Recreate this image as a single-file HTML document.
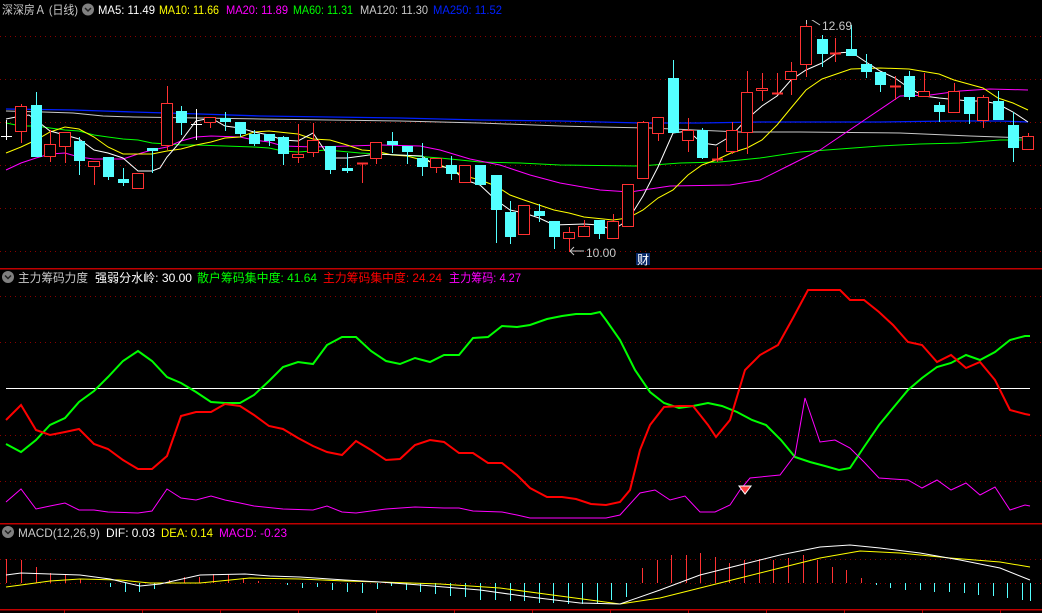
<!DOCTYPE html>
<html><head><meta charset="utf-8"><style>
html,body{margin:0;padding:0;background:#000;width:1042px;height:613px;overflow:hidden}
svg{display:block}
text{font-family:"Liberation Sans","Noto Sans CJK SC",sans-serif;font-size:12px}
</style></head><body>
<svg id="s" width="1042" height="613" xmlns="http://www.w3.org/2000/svg"></svg>
<script>
var o='';
function L(x1,y1,x2,y2,c,w,d){o+='<line x1="'+x1+'" y1="'+y1+'" x2="'+x2+'" y2="'+y2+'" stroke="'+c+'" stroke-width="'+(w||1)+'"'+(d?' stroke-dasharray="'+d+'"':'')+' shape-rendering="crispEdges"/>';}
function P(a,c,w){var p=[];for(var i=0;i<a.length;i+=2)p.push(a[i]+','+a[i+1]);o+='<polyline points="'+p.join(' ')+'" fill="none" stroke="'+c+'" stroke-width="'+(w||1)+'"/>';}
function T(x,y,t,c,tl){o+='<text x="'+x+'" y="'+y+'" fill="'+c+'"'+(tl?' textLength="'+tl+'" lengthAdjust="spacingAndGlyphs"':'')+'>'+t+'</text>';}
[36,79,122,165,208,251].forEach(function(y){L(0,y+.5,1042,y+.5,'#8a0000',1,'1,4');});
[296,342,435,481].forEach(function(y){L(0,y+.5,1042,y+.5,'#8a0000',1,'1,4');});
[559,583].forEach(function(y){L(0,y+.5,1042,y+.5,'#8a0000',1,'1,4');});
L(0,268.5,1042,268.5,'#c00000',1.5);L(0,523.5,1042,523.5,'#c00000',1.5);L(0,609.5,1042,609.5,'#c00000',1.5);
[64,142,220,298,376,454,532,610,688,766,844,922,1000].forEach(function(x){L(x+.5,609,x+.5,613,'#c00000');});
P([6,111,43,112,73,113,103,116,133,117,200,118,260,119,330,120,400,121,480,123,560,126,600,127,650,128,740,132,800,132,900,133,970,136,1028,138],'#c8c8c8');
P([6,109,73,110,103,111,133,112,200,114,260,116,330,117,400,118,480,120,560,121,640,123,700,123,760,122,820,122,880,122,950,121,1000,121,1028,122],'#0020ff',1.3);
P([6,123,21,126,36,126,50,128,65,130,79,131,94,135,108,137,123,139,138,140,152,143,167,144,181,145,196,145,225,146,254,147,269,148,283,151,298,152,327,150,360,153,400,155,440,158,480,162,520,163,560,165,640,166,680,163,720,162,760,158,800,152,840,149,880,146,920,144,960,143,1000,140,1028,140],'#00ff00');
P([6,170,21,163,36,158,50,154,65,153,79,157,94,159,123,159,138,154,152,150,167,147,181,141,196,137,211,136,240,137,254,140,269,142,283,146,313,147,350,146,380,145,420,146,440,150,470,159,500,165,530,175,560,183,600,190,630,192,670,186,730,185,760,180,790,165,820,150,860,123,900,96,930,95,960,91,990,89,1028,90],'#ff00ff');
P([6,153,21,147,36,140,50,132,65,127,79,129,94,137,108,147,123,154,152,154,167,151,181,149,196,145,211,142,225,138,240,137,254,132,269,131,298,134,313,139,330,140,347,145,362,150,376,151,392,155,407,156,422,160,436,163,451,170,465,176,480,180,496,186,510,195,524,200,539,205,554,210,569,213,584,217,613,220,628,218,643,210,658,198,673,190,688,175,702,165,716,160,731,153,747,148,762,140,777,125,791,108,806,90,822,79,851,69,880,68,909,69,939,74,954,80,983,88,998,98,1013,103,1028,110],'#ffff00');
P([6,119,21,116,29,115,36,120,50,131,65,135,79,139,94,150,108,153,123,158,138,171,152,171,160,168,167,157,181,141,196,121,211,118,225,126,240,128,254,132,269,135,283,140,298,141,313,133,330,158,347,158,362,156,376,154,422,156,436,166,451,168,465,180,480,185,496,200,510,210,524,213,539,218,554,225,584,224,599,225,613,230,628,220,643,196,658,167,673,133,688,131,702,143,716,145,731,136,747,119,762,106,777,96,791,80,806,70,822,63,837,53,851,52,866,62,880,71,895,78,909,88,924,96,939,98,969,101,983,101,998,104,1013,112,1028,122],'#ffffff');
var K=[[6,136,136,120,140,'w'],[21,106,132,104,143,'r'],[36,105,157,92,157,'c'],[50,144,157,130,162,'r'],[65,132,147,132,163,'r'],[79,141,161,137,175,'c'],[94,161,167,161,185,'r'],[108,157,177,157,180,'c'],[123,179,183,168,186,'c'],[138,173,189,173,189,'r'],[152,148,151,148,173,'c'],[167,103,146,86,150,'r'],[181,111,123,106,135,'c'],[196,124,124,109,140,'w'],[210,117,123,117,128,'r'],[225,118,122,112,131,'c'],[240,122,134,122,137,'c'],[254,134,144,130,146,'c'],[269,134,141,134,146,'c'],[283,137,154,136,165,'c'],[298,154,158,124,163,'r'],[313,140,153,123,157,'r'],[330,146,170,146,174,'c'],[347,168,171,153,173,'c'],[362,163,163,163,183,'R'],[376,142,159,142,164,'r'],[392,141,145,132,153,'c'],[407,146,152,146,164,'c'],[422,158,167,143,176,'c'],[436,158,168,158,173,'r'],[451,165,174,156,180,'c'],[465,165,183,165,183,'r'],[480,165,185,165,185,'c'],[496,175,210,175,243,'c'],[510,212,237,201,244,'c'],[524,205,235,205,235,'r'],[539,211,216,204,222,'c'],[554,221,237,221,249,'c'],[569,232,239,227,252,'r'],[584,226,237,220,237,'r'],[599,220,234,220,239,'c'],[613,221,239,214,239,'r'],[628,184,227,184,227,'r'],[643,122,179,121,179,'r'],[658,117,134,117,141,'r'],[673,78,133,60,133,'c'],[688,130,141,118,152,'r'],[702,130,158,128,159,'c'],[717,159,159,147,162,'R'],[732,130,152,122,154,'r'],[747,92,133,71,154,'r'],[762,88,91,73,101,'r'],[777,93,93,73,93,'R'],[791,71,80,62,95,'r'],[806,26,65,20,77,'r'],[822,39,54,35,67,'c'],[835,53,53,38,62,'R'],[851,49,56,25,56,'c'],[866,64,72,54,78,'c'],[880,72,85,72,92,'c'],[895,86,86,76,100,'R'],[909,76,97,71,100,'c'],[924,91,97,73,97,'r'],[939,105,112,102,122,'c'],[954,91,113,83,113,'r'],[969,97,114,97,124,'c'],[983,97,121,95,128,'r'],[998,101,120,91,120,'c'],[1013,125,148,112,162,'c'],[1028,136,150,133,150,'r']];
K.forEach(function(k){var x=k[0],c=k[5];
 var col=(c=='c')?'#54ffff':(c=='w')?'#ffffff':'#ff3232';
 L(x+.5,k[3],x+.5,k[4],col);
 if(c=='r'){o+='<rect x="'+(x-5.5)+'" y="'+(k[1]+.5)+'" width="11" height="'+Math.max(1,k[2]-k[1]-1)+'" fill="#000" stroke="#ff3232" stroke-width="1"/>';}
 else if(c=='c'){o+='<rect x="'+(x-5)+'" y="'+k[1]+'" width="11" height="'+Math.max(2,k[2]-k[1])+'" fill="#54ffff"/>';}
 else {L(x-5,k[1]+.5,x+6,k[1]+.5,col,c=='R'?2:1);}
});
T(822,30,'12.69','#c8c8c8');P([806,20,809,18,820,25],'#c8c8c8');L(806.5,17,806.5,24,'#c8c8c8');
T(586,257,'10.00','#c8c8c8');P([584,251,570,251],'#c8c8c8');P([574,247,570,251,574,255],'#c8c8c8');L(569.5,240,569.5,252,'#ff3232');
o+='<rect x="636" y="253" width="14" height="12" fill="#0a2a6a"/>';T(637,264,'财','#ffffff');
L(6,388.5,1030,388.5,'#ffffff');
P([6,444,21,452,36,440,50,425,65,418,79,402,94,391,108,377,123,361,138,351,152,361,167,377,181,383,196,392,211,402,225,403,240,403,254,395,269,381,283,367,298,362,313,364,327,345,342,337,356,337,371,351,386,361,400,364,415,358,430,362,444,355,459,355,473,338,488,337,502,326,517,327,530,325,547,319,562,316,576,314,591,314,600,312,606,320,620,340,635,370,650,392,664,403,679,408,693,406,708,403,722,406,737,412,752,420,766,425,781,440,795,457,810,462,825,466,839,470,850,468,864,447,879,425,893,408,908,390,922,378,937,367,951,363,966,355,980,360,995,352,1010,340,1025,336,1030,336],'#00ff00',2);
P([6,420,21,405,36,430,50,435,65,432,79,429,94,444,108,449,123,460,138,469,152,469,167,456,181,416,196,412,211,412,225,404,240,406,254,415,269,426,283,429,298,438,313,446,327,452,342,455,356,441,371,450,386,460,400,459,415,445,430,440,444,442,459,453,473,453,488,463,502,463,517,475,530,488,547,497,562,497,576,499,591,504,606,505,620,502,630,490,640,450,650,425,664,407,679,406,693,406,708,425,716,437,730,420,745,370,760,355,778,345,793,318,808,290,840,290,850,300,864,300,879,312,893,325,908,342,922,345,937,362,951,355,966,368,980,362,995,380,1010,410,1025,414,1030,415],'#ff0000',2);
P([6,502,21,489,36,509,50,506,65,503,79,510,94,510,108,512,138,513,152,511,167,489,181,498,196,500,211,496,225,500,240,503,254,506,283,509,313,510,327,506,342,512,356,513,386,509,415,507,444,508,459,508,473,511,502,512,517,515,530,518,606,518,620,515,640,493,655,490,670,500,685,496,700,512,715,512,730,505,740,490,750,478,780,475,795,455,805,398,820,442,835,440,850,448,864,462,879,478,908,480,922,488,937,480,951,490,966,483,980,495,995,487,1010,510,1025,505,1030,506],'#ff00ff');
o+='<path d="M739 486 L751 486 L745 494 Z" fill="#ff4040" stroke="#fff" stroke-width="1"/>';
var B=[[6,559],[21,560],[36,567],[50,573],[65,574],[80,579],[110,587],[125,592],[139,592],[154,589],[169,580],[184,577],[199,577],[213,574],[228,574],[243,578],[258,581],[287,585],[302,588],[317,587],[332,590],[347,592],[362,593],[377,589],[391,586],[406,590],[420,592],[435,594],[450,596],[465,597],[480,600],[495,600],[510,601],[524,601],[539,603],[553,603],[568,604],[582,604],[597,603],[611,600],[626,597],[642,568],[657,560],[671,555],[686,555],[700,553],[715,557],[729,563],[744,560],[759,559],[773,560],[788,558],[803,555],[817,560],[832,567],[846,570],[861,578],[876,585],[890,588],[905,590],[920,590],[934,592],[949,592],[964,593],[978,595],[993,596],[1007,598],[1022,600],[1030,601]];
B.forEach(function(b){L(b[0]+.5,583,b[0]+.5,b[1],b[1]<583?'#ff3232':'#54ffff');});
P([6,587,21,585,50,581,80,579,120,580,150,583,200,583,250,578,300,579,345,581,380,582,440,584,500,588,560,596,620,604,660,598,700,588,740,578,780,568,820,558,860,551,900,553,950,558,1000,562,1030,567],'#ffff00');
P([6,575,21,573,50,574,80,575,110,579,140,586,160,584,200,575,245,574,270,576,300,577,345,580,380,582,420,585,480,590,530,597,580,603,620,604,660,590,700,575,740,565,780,555,820,547,850,545,880,548,920,553,960,560,1000,568,1030,580],'#ffffff');
o+='<rect x="0" y="0" width="1042" height="20" fill="#000"/>';
T(2,14,'深深房Ａ (日线)','#c8c8c8',76);
o+='<circle cx="88" cy="9.5" r="6" fill="#808080"/><path d="M85 8 L88 11 L91 8" fill="none" stroke="#222" stroke-width="1.5"/>';
T(98,14,'MA5: 11.49','#ffffff',57);T(159,14,'MA10: 11.66','#ffff00',60);T(226,14,'MA20: 11.89','#ff00ff',62);T(293,14,'MA60: 11.31','#00ff00',60);T(360,14,'MA120: 11.30','#c8c8c8',68);T(433,14,'MA250: 11.52','#0020ff',69);
o+='<circle cx="8" cy="277" r="6" fill="#808080"/><path d="M5 275.5 L8 278.5 L11 275.5" fill="none" stroke="#222" stroke-width="1.5"/>';
T(18,282,'主力筹码力度','#c8c8c8',70);T(95,282,'强弱分水岭: 30.00','#ffffff',97);T(197,282,'散户筹码集中度: 41.64','#00ff00',120);T(323,282,'主力筹码集中度: 24.24','#ff0000',119);T(449,282,'主力筹码: 4.27','#ff00ff',72);
o+='<circle cx="8" cy="532" r="6" fill="#808080"/><path d="M5 530.5 L8 533.5 L11 530.5" fill="none" stroke="#222" stroke-width="1.5"/>';
T(18,537,'MACD(12,26,9)','#c8c8c8',82);T(106,537,'DIF: 0.03','#ffffff',49);T(161,537,'DEA: 0.14','#ffff00',52);T(219,537,'MACD: -0.23','#ff00ff',68);
document.getElementById('s').innerHTML=o;
</script>
</body></html>
